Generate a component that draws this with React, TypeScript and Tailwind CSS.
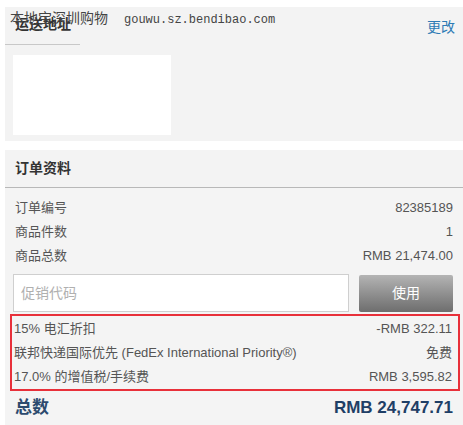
const rows = [
  { label: '订单编号', value: '82385189' },
  { label: '商品件数', value: '1' },
  { label: '商品总数', value: 'RMB 21,474.00' },
]

const fees = [
  { label: '15% 电汇折扣', value: '-RMB 322.11' },
  { label: '联邦快递国际优先 (FedEx International Priority®)', value: '免费' },
  { label: '17.0% 的增值税/手续费', value: 'RMB 3,595.82' },
]

const App = () => {
  return (
    <div className="relative h-[425px] w-[463px] overflow-hidden bg-white pl-[5px] pt-[7px] font-['Liberation_Sans','Noto_Sans_CJK_SC',sans-serif] text-[13px] text-[#555]">
      {/* watermark line from the source site */}
      <div className="absolute left-[10px] top-[7px] flex items-baseline gap-[16px] text-[#444]">
        <span className="text-[14px] font-['Noto_Sans_CJK_SC',sans-serif]">本地宝深圳购物</span>
        <span className="font-['Liberation_Mono',monospace] text-[12px]">gouwu.sz.bendibao.com</span>
      </div>

      <div className="flex h-[134px] flex-col bg-[#f3f3f3]">
        <div className="flex items-center justify-between pr-[8px]">
          <div className="flex h-[38px] w-[75px] items-end border-b border-[#c8c8c8] pb-[9px] pl-[10px] text-[14px] font-bold text-[#333]">
            运送地址
          </div>
          <span className="pt-[2px] text-[14px] text-[#2d7bb5]">更改</span>
        </div>
        <div className="ml-[8px] mt-[10px] h-[80px] w-[158px] bg-white" />
      </div>

      <div className="mt-[9px] flex h-[280px] flex-col bg-[#f3f3f3]">
        <div className="flex h-[38px] items-center border-b border-[#b8b8b8] pl-[10px] text-[14px] font-bold text-[#333]">
          订单资料
        </div>
        <div className="flex flex-col bg-[#f4f4f4] pt-[8px]">
          {rows.map((r) => (
            <div key={r.label} className="flex h-[24px] items-center justify-between pl-[10px] pr-[10px]">
              <span>{r.label}</span>
              <span>{r.value}</span>
            </div>
          ))}
          <div className="mt-[6px] flex items-center gap-[10px] pl-[8px] pr-[10px]">
            <div className="flex h-[38px] flex-1 items-center border border-[#cfcfcf] bg-white pl-[7px] text-[14px] text-[#b0b0b0]">
              促销代码
            </div>
            <div className="flex h-[37px] w-[94px] items-center justify-center rounded-[2px] bg-gradient-to-b from-[#b4b4b4] to-[#6e6e6e] text-[14px] text-white">
              使用
            </div>
          </div>
          <div className="ml-[5px] mr-[3px] mt-[2px] flex flex-col border-2 border-[#e8303a] pt-[1px]">
            {fees.map((f) => (
              <div key={f.label} className="flex h-[24px] items-center justify-between pl-[2px] pr-[6px]">
                <span>{f.label}</span>
                <span>{f.value}</span>
              </div>
            ))}
          </div>
          <div className="flex h-[34px] items-center justify-between pl-[10px] pr-[10px]">
            <span className="text-[17px] font-bold text-[#2c4a6e]">总数</span>
            <span className="text-[17px] font-bold text-[#1f3f66]">RMB 24,747.71</span>
          </div>
        </div>
      </div>
    </div>
  )
}

export default App
